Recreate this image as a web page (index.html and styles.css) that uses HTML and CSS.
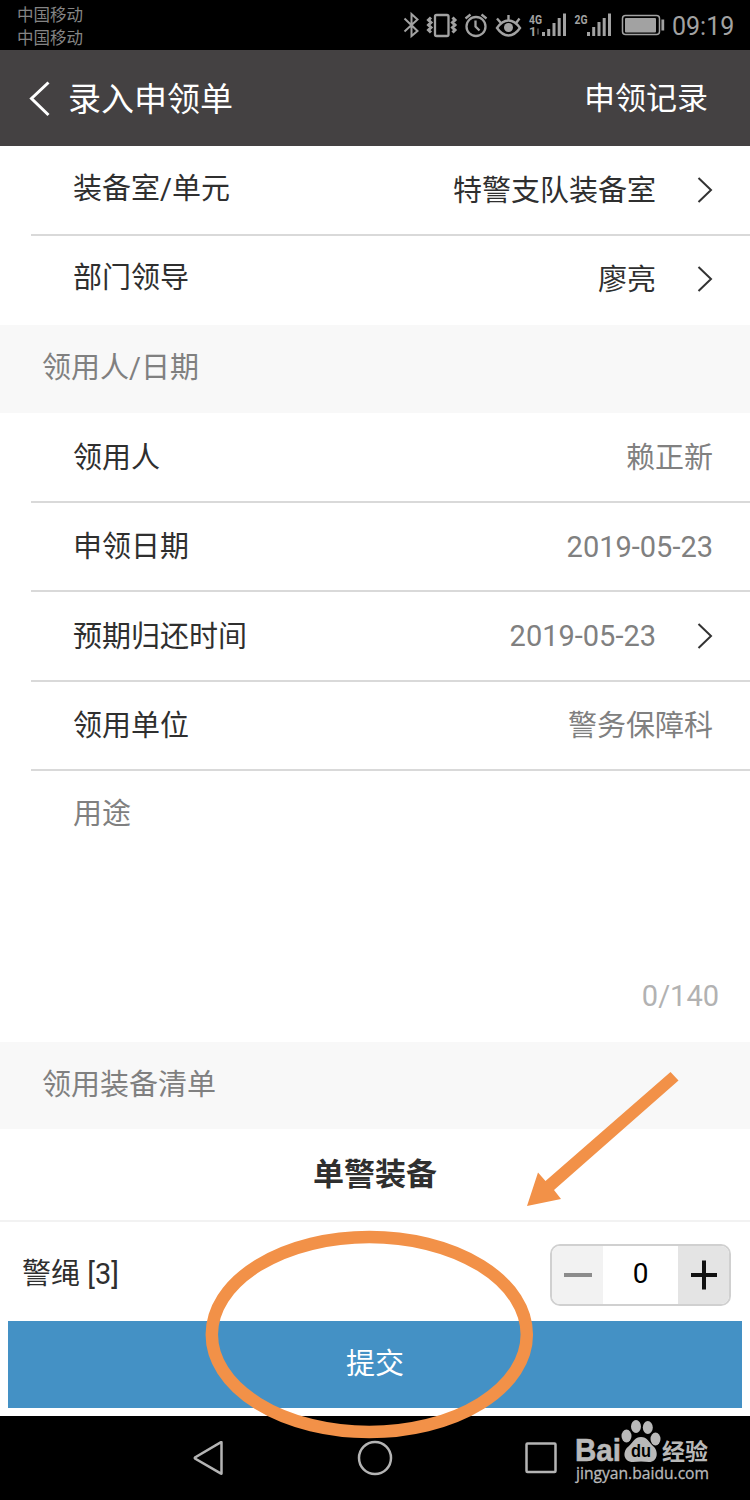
FILE: index.html
```html
<!DOCTYPE html>
<html lang="zh-CN">
<head>
    <meta charset="UTF-8">
    <meta name="viewport" content="width=device-width, initial-scale=1.0">
    <title>录入申领单</title>
    <link rel="stylesheet" href="styles.css">
</head>
<body>
    <div class="status-bar">
        <div class="carriers">
            <div>中国移动</div>
            <div>中国移动</div>
        </div>
        <!-- bluetooth, vibrate, alarm, eye comfort, signals, battery -->
        <svg class="status-icons" width="270" height="50" viewBox="400 0 270 50" fill="none" stroke="#a2a2a2" stroke-width="2">
            <path d="M404.500 18.500L417.500 31L411.500 36V14L417.500 19.500L404.500 31.500"/>
            <rect x="435" y="15" width="13.500" height="21" rx="1.500" stroke-width="2.300"/>
            <path d="M431 17.500l-2.500 2.500 2.500 2.500-2.500 2.500 2.500 2.500-2.500 2.500 2.500 2.500M452.500 17.500l2.500 2.500-2.500 2.500 2.500 2.500-2.500 2.500 2.500 2.500-2.500 2.500" stroke-width="3"/>
            <circle cx="476" cy="26.500" r="9.500" stroke-width="2.300"/>
            <path d="M475.500 20.500v6l4 4M465.500 18.500l5-4M486.500 18.500l-5-4" stroke-width="2.300"/>
            <path d="M497 28C504 18 513 18 520 28C513 38 504 38 497 28zM508.500 20.500v-5.500M500.500 22.500l-3.500-4M516.500 22.500l3-4" stroke-width="2.400"/>
            <circle cx="508.500" cy="27.500" r="4.500" fill="#a2a2a2" stroke="none"/>
            <path d="M543.500 36v-4M548.700 36v-7M554 36V23M559.200 36V18M564.500 36V13.500M588.500 36v-4M593.700 36v-9M599 36V22M604.200 36V18M609.500 36V13.500" stroke-width="3"/>
            <path d="M538 28.500v6" stroke="#444"/>
            <rect x="622.500" y="15.500" width="37" height="19" rx="3" stroke-width="1.500"/>
            <rect x="625" y="18" width="31" height="14.500" rx="1" fill="#a2a2a2" stroke="none"/>
            <path d="M662.800 19.500v11" stroke-width="2.800"/>
            <g class="net">
                <text x="529" y="23.500" textLength="13" lengthAdjust="spacingAndGlyphs">4G</text>
                <text x="529" y="36">1</text>
                <text x="574.500" y="23.500" textLength="13" lengthAdjust="spacingAndGlyphs">2G</text>
            </g>
        </svg>
        <span class="clock">09:19</span>
    </div>

    <div class="header">
        <svg class="back" width="22" height="36" viewBox="0 0 22 36" fill="none" stroke="#fff" stroke-width="3">
            <path d="M19.500 1.500L2.500 17.500L19.500 34"/>
        </svg>
        <h1>录入申领单</h1>
        <a class="history">申领记录</a>
    </div>

    <div class="list raised">
        <div class="row">
            <span class="label">装备室/单元</span>
            <span class="value dark">特警支队装备室</span>
            <svg class="arrow" width="16" height="26" viewBox="0 0 16 26"><path d="M1.500 1L14 13L1.500 25"/></svg>
        </div>
        <div class="row">
            <span class="label">部门领导</span>
            <span class="value dark">廖亮</span>
            <svg class="arrow" width="16" height="26" viewBox="0 0 16 26"><path d="M1.500 1L14 13L1.500 25"/></svg>
        </div>
    </div>

    <div class="section">领用人/日期</div>

    <div class="list people">
        <div class="row">
            <span class="label">领用人</span>
            <span class="value">赖正新</span>
        </div>
        <div class="row">
            <span class="label">申领日期</span>
            <span class="value date">2019-05-23</span>
        </div>
        <div class="row">
            <span class="label">预期归还时间</span>
            <span class="value date">2019-05-23</span>
            <svg class="arrow" width="16" height="26" viewBox="0 0 16 26"><path d="M1.500 1L14 13L1.500 25"/></svg>
        </div>
        <div class="row">
            <span class="label">领用单位</span>
            <span class="value">警务保障科</span>
        </div>
    </div>

    <div class="purpose">
        <div class="placeholder">用途</div>
        <div class="counter">0/140</div>
    </div>

    <div class="section second">领用装备清单</div>

    <h2>单警装备</h2>

    <div class="item">
        <span class="item-name">警绳 [3]</span>
        <div class="stepper">
            <div class="step minus"><svg width="28" height="30" viewBox="0 0 28 30"><path d="M0 15h28" stroke="#8c8c8c" stroke-width="4"/></svg></div>
            <div class="num">0</div>
            <div class="step plus"><svg width="26" height="30" viewBox="0 0 26 30"><path d="M0 15h26M13 0.500v29" stroke="#111" stroke-width="4"/></svg></div>
        </div>
    </div>

    <div class="submit">提交</div>

    <div class="nav-bar">
        <svg width="34" height="38" viewBox="0 0 34 38"><path d="M30.500 3.500V34.500Q30.500 35 30 34.600L4 19.500Q3.500 19 4 18.500L30 3.200Q30.500 3 30.500 3.500z"/></svg>
        <svg width="38" height="38" viewBox="0 0 38 38"><circle cx="19" cy="19" r="16"/></svg>
        <svg width="34" height="34" viewBox="0 0 34 34"><rect x="2.500" y="2.500" width="29" height="28.500" rx="1"/></svg>
    </div>

    <svg class="watermark" width="150" height="84" viewBox="570 1416 150 84">
        <text class="wm-logo" x="575" y="1461" textLength="46" lengthAdjust="spacingAndGlyphs">Bai</text>
        <ellipse cx="626.500" cy="1436" rx="5" ry="6.500"/>
        <ellipse cx="636" cy="1426.500" rx="5" ry="6.500"/>
        <ellipse cx="647.800" cy="1427.500" rx="5" ry="6.500"/>
        <ellipse cx="655.500" cy="1439" rx="5" ry="6.500"/>
        <path d="M641 1437C647 1437 649 1442 653 1446C659 1451 658 1462 649 1462Q641 1461 633 1462C623 1462 622 1451 629 1446C633 1442 635 1437 641 1437z"/>
        <text class="wm-du" x="631" y="1457" textLength="20" lengthAdjust="spacingAndGlyphs">du</text>
        <text class="wm-cn" x="662" y="1459.500">经验</text>
        <text class="wm-url" x="576" y="1479" textLength="133" lengthAdjust="spacingAndGlyphs">jingyan.baidu.com</text>
    </svg>

    <!-- hint marks on top of the page -->
    <svg class="marks" width="750" height="1500" viewBox="0 0 750 1500">
        <ellipse cx="369.300" cy="1334.500" rx="157.500" ry="97.500" fill="none" stroke="#f29148" stroke-width="12.500"/>
        <path d="M670.500 1072L678.500 1080.500L554 1190L561 1199L527 1206L538 1172.500L545.500 1181z" fill="#f29148"/>
    </svg>
</body>
</html>
```

FILE: styles.css
```css
* {
    box-sizing: border-box;
}

body {
    margin: 0;
    position: relative;
    width: 750px;
    height: 1500px;
    overflow: hidden;
    background-color: #fff;
    color: #2f2f2f;
    font-family: Roboto, "Noto Sans CJK SC", sans-serif;
    font-size: 29px;
    line-height: 40px;
}

h1, h2 {
    margin: 0;
}

.status-bar {
    display: flex;
    height: 50px;
    background-color: #000;
    color: #a2a2a2;
}

.carriers {
    width: 383px;
    margin-left: 17px;
    padding-top: 5px;
    font-size: 16.5px;
    line-height: 22.5px;
    color: #858585;
}

.status-icons {
    flex: none;
}

.net text {
    font-family: Roboto, sans-serif;
    font-size: 13px;
    font-weight: bold;
    fill: #a2a2a2;
    stroke: none;
}

.clock {
    margin-left: 2px;
    font-size: 25px;
    line-height: 53px;
}

.header {
    display: flex;
    align-items: center;
    height: 96px;
    padding: 0 42px 0 29px;
    background-color: #444142;
    color: #fff;
}

.header h1 {
    flex: 1;
    margin-left: 17px;
    padding-top: 3px;
    font-size: 33px;
    font-weight: normal;
}

.history {
    padding-top: 2px;
    font-size: 31px;
}

.back {
    margin-top: 1px;
}

.row {
    display: flex;
    align-items: center;
    height: 89.5px;
    margin-left: 31px;
    padding: 0 37px 0 42px;
    border-bottom: 2px solid #d9d9d9;
}

.label {
    flex: 1;
    padding-top: 2px;
}

.value {
    padding-top: 2px;
    color: #808080;
}

.date {
    padding-top: 1px;
}

.dark {
    color: #2f2f2f;
}

.raised .row:last-child {
    border-bottom-color: transparent;
}

.raised .label {
    padding-top: 0;
    padding-bottom: 2px;
}

.arrow {
    margin-left: 41px;
    fill: none;
    stroke: #333;
    stroke-width: 2;
}

.section {
    height: 88px;
    padding: 23px 42px;
    background-color: #f8f8f8;
    color: #808080;
}

.second {
    height: 87px;
}

.people {
    height: 358px;
}

.purpose {
    display: flex;
    flex-direction: column;
    justify-content: space-between;
    height: 271px;
    padding: 23px 31px 26px 73px;
    color: #808080;
}

.counter {
    text-align: right;
    color: #b2b2b2;
}

h2 {
    height: 93px;
    border-bottom: 2px solid #f2f2f2;
    text-align: center;
    font-size: 31px;
    line-height: 91px;
}

.item {
    display: flex;
    justify-content: space-between;
    height: 99px;
    padding: 22px 19px 0 22px;
}

.item-name {
    padding-top: 10px;
}

.stepper {
    display: flex;
    width: 181px;
    height: 62px;
    border: 2px solid #d0d0d0;
    border-radius: 10px;
    overflow: hidden;
}

.step {
    display: flex;
    align-items: center;
    justify-content: center;
    width: 51px;
}

.minus {
    background-color: #f2f2f2;
}

.plus {
    background-color: #e4e4e4;
}

.num {
    flex: 1;
    text-align: center;
    color: #000;
    font-size: 28px;
    line-height: 56px;
}

.submit {
    height: 87px;
    margin: 0 8px 8px;
    background-color: #4491c5;
    color: #fff;
    text-align: center;
    line-height: 86px;
}

.nav-bar {
    display: flex;
    justify-content: space-between;
    align-items: center;
    height: 84px;
    padding: 0 192px 0 191px;
    background-color: #000;
    fill: none;
    stroke: #b4b4b4;
    stroke-width: 2.5;
}

.watermark {
    position: absolute;
    left: 570px;
    top: 1416px;
    fill: #b9b9b9;
}

.wm-logo {
    font-family: "Liberation Sans", sans-serif;
    font-size: 31px;
    font-weight: bold;
    stroke: #b9b9b9;
    stroke-width: 0.6;
}

.wm-du {
    font-family: "Liberation Sans", sans-serif;
    font-size: 18px;
    font-weight: bold;
    fill: #000;
}

.wm-cn {
    font-size: 23px;
    font-weight: bold;
}

.wm-url {
    font-family: "Open Sans", sans-serif;
    font-size: 16px;
    stroke: #b9b9b9;
    stroke-width: 0.3;
}

.marks {
    position: absolute;
    left: 0;
    top: 0;
}
```
